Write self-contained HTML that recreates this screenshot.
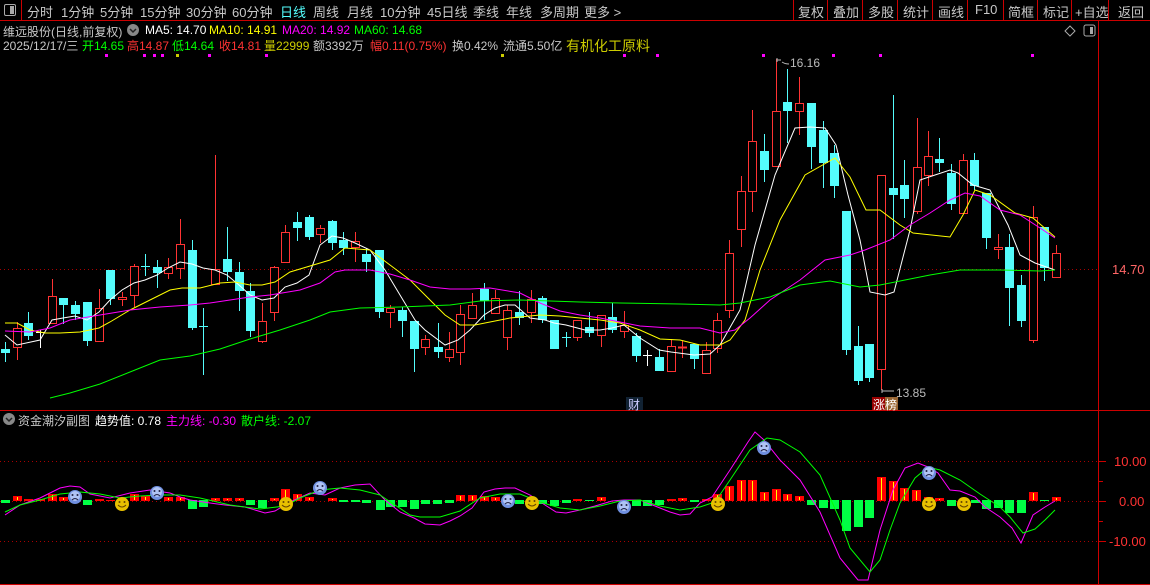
<!DOCTYPE html>
<html><head><meta charset="utf-8"><style>
body{margin:0;background:#000;width:1150px;height:585px;overflow:hidden;font-family:"Liberation Sans","Noto Sans CJK SC",sans-serif;position:relative}
.t{position:absolute;white-space:nowrap;font-size:12px}
#top{position:absolute;left:0;top:0;width:1150px;height:20px;border-bottom:1px solid #c00}
#top span{position:absolute;top:2px;font-size:13px;color:#c8c8c8;white-space:nowrap}
</style></head><body>
<div id="top">
<div style="position:absolute;left:1px;top:0;width:20px;height:20px;border-right:1px solid #c00"></div>
<div style="position:absolute;left:4px;top:4px;width:10px;height:10px;border:1px solid #aaa;border-radius:2px"><div style="position:absolute;right:1px;top:1px;width:4px;height:8px;background:#aaa"></div></div>
<span style="left:27px">分时</span><span style="left:61px">1分钟</span><span style="left:100px">5分钟</span><span style="left:140px">15分钟</span><span style="left:186px">30分钟</span><span style="left:232px">60分钟</span>
<span style="left:280px;color:#5ff">日线</span>
<span style="left:313px">周线</span><span style="left:347px">月线</span><span style="left:380px">10分钟</span><span style="left:427px">45日线</span><span style="left:473px">季线</span><span style="left:506px">年线</span><span style="left:540px">多周期</span><span style="left:584px">更多 &gt;</span>
<span style="left:798px">复权</span><span style="left:833px">叠加</span><span style="left:868px">多股</span><span style="left:903px">统计</span><span style="left:938px">画线</span><span style="left:975px">F10</span><span style="left:1008px">简框</span><span style="left:1043px">标记</span><span style="left:1075px">+自选</span><span style="left:1118px">返回</span>
</div>
<svg width="1150" height="585" style="position:absolute;left:0;top:0" id="s">
<g stroke="#c00" stroke-width="1">
<line x1="793.5" y1="0" x2="793.5" y2="20"/><line x1="827.5" y1="0" x2="827.5" y2="20"/><line x1="862.5" y1="0" x2="862.5" y2="20"/><line x1="897.5" y1="0" x2="897.5" y2="20"/><line x1="932.5" y1="0" x2="932.5" y2="20"/><line x1="967.5" y1="0" x2="967.5" y2="20"/><line x1="1003.5" y1="0" x2="1003.5" y2="20"/><line x1="1037.5" y1="0" x2="1037.5" y2="20"/><line x1="1071.5" y1="0" x2="1071.5" y2="20"/><line x1="1108.5" y1="0" x2="1108.5" y2="20"/>
<line x1="1098.5" y1="20" x2="1098.5" y2="585"/>
<line x1="0" y1="410.5" x2="1150" y2="410.5"/>
<line x1="0" y1="584.5" x2="1150" y2="584.5"/>
<line x1="1098" y1="481.5" x2="1103" y2="481.5"/><line x1="1098" y1="521.5" x2="1103" y2="521.5"/><line x1="1098" y1="461.5" x2="1106" y2="461.5"/><line x1="1098" y1="501.5" x2="1106" y2="501.5"/><line x1="1098" y1="541.5" x2="1106" y2="541.5"/>
</g>
<g stroke="#a00" stroke-dasharray="1 3">
<line x1="0" y1="269.5" x2="1098" y2="269.5"/><line x1="0" y1="461.5" x2="1098" y2="461.5"/><line x1="0" y1="501.5" x2="1098" y2="501.5"/><line x1="0" y1="541.5" x2="1098" y2="541.5"/>
</g>
<g id="c"></g>
<g fill="none" stroke-width="1">
<polyline stroke="#fff" points="5,335 17,345 40,340 52,320 63,318 75,316 87,320 99,312 110,300 122,290 134,283 145,280 157,275 168,268 180,262 192,264 203,268 215,270 227,275 239,285 250,295 262,300 274,298 285,287 297,283 309,275 320,245 332,236 343,238 355,243 370,250 385,270 400,295 415,320 425,330 445,345 458,340 470,330 484,315 495,308 505,305 515,305 530,318 545,320 554,323 566,325 585,330 600,330 612,328 624,325 640,338 659,350 671,352 694,355 710,354 720,345 740,310 755,245 775,175 795,128 810,127 825,128 836,145 848,195 860,240 870,292 885,295 894,292 910,230 920,180 935,175 950,170 958,173 973,185 990,190 1008,225 1020,255 1035,263 1055,270"/>
<polyline stroke="#ff0" points="5,323 17,323 30,330 45,333 60,333 80,332 99,328 110,322 130,310 150,300 170,290 182,288 200,288 220,283 235,282 250,285 262,285 275,282 290,272 310,266 330,260 345,248 370,250 390,265 410,280 430,300 445,315 460,325 475,325 490,322 510,318 540,315 560,316 580,318 600,320 620,323 640,330 660,339 680,340 700,345 720,345 730,340 745,320 760,270 780,220 805,175 835,158 850,177 866,210 880,210 900,225 913,233 950,237 963,215 975,190 990,195 1015,213 1033,218 1055,237"/>
<polyline stroke="#f0f" points="5,331 30,332 50,328 70,320 100,315 130,310 160,307 190,305 210,303 230,300 250,297 270,295 300,290 320,283 335,272 345,270 370,270 390,274 410,280 430,287 450,289 470,289 490,288 520,293 540,303 560,311 580,315 600,318 620,322 640,326 670,328 700,328 720,333 735,330 750,318 770,300 800,280 825,260 850,255 865,250 890,240 910,225 930,213 950,200 965,193 980,196 1000,210 1020,215 1040,228 1055,238"/>
<polyline stroke="#0f0" points="50,398 70,393 100,384 130,372 160,360 190,356 220,349 250,339 280,330 310,320 330,312 360,308 400,307 450,305 480,301 520,300 580,302 620,303 680,304 720,305 740,303 770,297 800,285 830,281 860,287 880,285 900,281 930,275 960,270 1000,270 1040,271 1055,270"/>
</g>
<g id="b"></g>
<g fill="none" stroke-width="1">
<polyline stroke="#f0f" points="5,515 20,505 40,498 50,493 60,488 70,486 80,487 90,494 110,498 130,493 150,490 170,493 180,497 190,500 210,503 225,505 245,507 265,513 275,511 290,502 310,493 325,495 340,488 355,485 370,484 385,500 400,512 414,518 425,524 440,525 450,521 460,516 472,508 484,492 495,489 505,488 515,488 530,495 545,505 556,512 566,513 580,510 595,506 612,501 624,500 640,500 660,508 670,512 680,515 690,514 700,503 712,497 730,470 748,442 755,432 764,440 780,460 800,480 820,512 840,558 858,580 868,580 880,530 893,490 905,468 918,463 928,467 938,473 950,490 960,491 975,497 985,507 1000,517 1012,528 1021,543 1033,515 1045,507 1055,501"/>
<polyline stroke="#0f0" points="5,512 20,505 40,500 60,494 80,492 100,494 120,498 140,496 160,495 180,495 200,498 230,505 260,509 285,506 300,498 320,490 340,488 360,490 380,495 395,505 410,515 420,517 440,517 460,511 480,498 500,494 520,494 540,502 560,508 580,510 600,506 620,501 640,500 660,506 680,510 700,507 715,502 730,480 750,450 767,438 780,440 800,452 820,475 840,520 850,548 870,572 880,560 890,530 900,503 915,478 928,467 940,470 960,480 980,494 1000,507 1010,517 1023,533 1035,529 1045,520 1055,510"/>
</g>
<g id="f"></g>
<g fill="#f0f"><rect x="105" y="54" width="3" height="3"/><rect x="143" y="54" width="3" height="3"/><rect x="153" y="54" width="3" height="3"/><rect x="161" y="54" width="3" height="3"/><rect x="208" y="54" width="3" height="3"/><rect x="265" y="54" width="3" height="3"/><rect x="623" y="54" width="3" height="3"/><rect x="656" y="54" width="3" height="3"/><rect x="762" y="54" width="3" height="3"/><rect x="832" y="54" width="3" height="3"/><rect x="879" y="54" width="3" height="3"/><rect x="1031" y="54" width="3" height="3"/></g>
<g fill="#cc0"><rect x="501" y="54" width="3" height="3"/><rect x="176" y="54" width="3" height="3"/></g>
<g stroke="#bbb" fill="none"><path d="M777,60 l4,0 M777,58 l0,4 M782,62 q3,2 7,2"/><path d="M882,391 l12,0 M882,389 l0,4"/></g>
<rect x="1084" y="25" width="11" height="11" rx="2" fill="none" stroke="#aaa"/><rect x="1090" y="27" width="3" height="7" fill="#aaa"/>
<path d="M1070,26 l5,5 l-5,5 l-5,-5z" fill="none" stroke="#aaa"/>
<circle cx="133" cy="30" r="6" fill="#888"/><path d="M130,29 l3,3 l3,-3" stroke="#222" fill="none" stroke-width="1.5"/>
<circle cx="9" cy="419" r="6" fill="#888"/><path d="M6,418 l3,3 l3,-3" stroke="#222" fill="none" stroke-width="1.5"/>
<rect x="626" y="397" width="17" height="13" fill="#123"/>
<rect x="872" y="397" width="13" height="13" fill="#900"/><rect x="885" y="397" width="13" height="13" fill="#963"/>
</svg>
<div class="t" style="left:3px;top:23px;color:#c8c8c8">维远股份(日线,前复权)</div>
<div class="t" style="left:145px;top:23px;color:#fff">MA5: 14.70</div>
<div class="t" style="left:209px;top:23px;color:#ff0">MA10: 14.91</div>
<div class="t" style="left:282px;top:23px;color:#f0f">MA20: 14.92</div>
<div class="t" style="left:354px;top:23px;color:#0f0">MA60: 14.68</div>
<div class="t" style="left:3px;top:37px;color:#c8c8c8">2025/12/17/三</div>
<div class="t" style="left:82px;top:37px;color:#0f0">开14.65</div>
<div class="t" style="left:127px;top:37px;color:#f33">高14.87</div>
<div class="t" style="left:172px;top:37px;color:#0f0">低14.64</div>
<div class="t" style="left:219px;top:37px;color:#f33">收14.81</div>
<div class="t" style="left:264px;top:37px;color:#cc0">量22999</div>
<div class="t" style="left:313px;top:37px;color:#c8c8c8">额3392万</div>
<div class="t" style="left:370px;top:37px;color:#f33">幅0.11(0.75%)</div>
<div class="t" style="left:452px;top:37px;color:#c8c8c8">换0.42%</div>
<div class="t" style="left:503px;top:37px;color:#c8c8c8">流通5.50亿</div>
<div class="t" style="left:566px;top:36px;color:#cc0;font-size:14px">有机化工原料</div>
<div class="t" style="left:790px;top:56px;color:#bbb">16.16</div>
<div class="t" style="left:896px;top:386px;color:#bbb">13.85</div>
<div class="t" style="left:628px;top:396px;color:#ccf">财</div>
<div class="t" style="left:873px;top:396px;color:#fff">涨榜</div>
<div class="t" style="left:1112px;top:262px;color:#f66;font-size:13px">14.70</div>
<div class="t" style="left:18px;top:412px;color:#c8c8c8">资金潮汐副图</div>
<div class="t" style="left:95px;top:412px;color:#fff">趋势值: 0.78</div>
<div class="t" style="left:166px;top:412px;color:#f0f">主力线: -0.30</div>
<div class="t" style="left:241px;top:412px;color:#0f0">散户线: -2.07</div>
<div class="t" style="left:1114px;top:454px;color:#f33;font-size:13px">10.00</div>
<div class="t" style="left:1119px;top:494px;color:#f33;font-size:13px">0.00</div>
<div class="t" style="left:1109px;top:534px;color:#f33;font-size:13px">-10.00</div>
<script>
var C=[[5,349,353,342,362,'c'],[17,328,347,322,360,'r'],[28,323,336,312,340,'c'],[40,332,333,330,348,'w'],[52,296,323,279,323,'r'],[63,298,305,298,324,'c'],[75,305,314,301,320,'c'],[87,302,341,302,346,'c'],[99,308,341,289,341,'r'],[110,270,299,270,305,'c'],[122,297,299,292,306,'r'],[134,266,295,264,307,'r'],[145,266,267,254,276,'c'],[157,267,273,260,288,'c'],[168,267,273,258,279,'r'],[180,244,268,219,279,'r'],[192,250,328,240,330,'c'],[203,326,327,308,375,'c'],[215,269,284,155,284,'r'],[227,259,272,227,281,'c'],[239,272,291,262,311,'c'],[250,291,331,283,337,'c'],[262,321,341,303,343,'r'],[274,267,312,266,321,'r'],[285,232,262,225,262,'r'],[297,222,228,212,241,'c'],[309,217,237,215,240,'c'],[320,228,234,225,243,'r'],[332,221,243,220,250,'c'],[343,240,248,232,255,'c'],[355,241,247,232,262,'r'],[366,254,262,248,272,'c'],[379,250,312,250,318,'c'],[390,308,312,305,328,'r'],[402,310,321,307,337,'c'],[414,321,349,321,372,'c'],[425,339,347,335,355,'r'],[438,347,352,323,358,'c'],[449,349,357,332,362,'r'],[460,314,352,305,365,'r'],[472,305,318,293,318,'r'],[484,289,301,283,320,'c'],[495,298,313,290,313,'r'],[507,310,337,305,350,'r'],[519,312,318,291,325,'c'],[531,299,312,290,323,'r'],[542,298,320,296,323,'c'],[554,320,349,320,349,'c'],[566,337,338,332,347,'c'],[577,320,337,320,341,'r'],[589,327,333,312,337,'c'],[601,315,335,315,347,'r'],[612,317,330,303,333,'c'],[624,325,331,311,338,'r'],[636,336,356,333,362,'c'],[647,355,356,350,366,'w'],[659,357,371,349,371,'c'],[671,346,371,339,371,'r'],[682,347,348,341,358,'r'],[694,344,359,344,369,'c'],[706,350,373,342,373,'r'],[717,320,348,313,353,'r'],[729,253,310,240,318,'r'],[741,191,229,176,247,'r'],[752,141,191,110,212,'r'],[764,151,170,134,182,'c'],[776,111,166,59,166,'r'],[787,102,111,69,143,'c'],[799,103,111,77,135,'r'],[811,103,147,103,169,'c'],[823,130,163,121,188,'c'],[834,153,186,145,198,'c'],[846,211,350,211,355,'c'],[858,346,381,326,385,'c'],[869,344,378,344,382,'c'],[881,175,369,175,390,'r'],[893,188,195,95,239,'c'],[904,185,199,160,218,'c'],[917,167,211,118,214,'r'],[928,156,175,131,186,'r'],[939,159,163,138,172,'c'],[951,173,204,164,210,'c'],[963,160,213,154,213,'r'],[974,160,186,153,190,'c'],[986,193,238,193,249,'c'],[998,247,249,234,259,'r'],[1009,247,288,234,326,'c'],[1021,285,321,275,327,'c'],[1033,217,340,206,343,'r'],[1044,227,268,227,281,'c'],[1056,253,277,245,278,'r']];
var col={r:'#f33',c:'#54fcfc',w:'#fff'},h='';
C.forEach(function(d){var x=d[0],k=col[d[5]];h+='<line x1="'+(x+.5)+'" y1="'+d[3]+'" x2="'+(x+.5)+'" y2="'+d[4]+'" stroke="'+k+'"/>';
var ht=d[2]-d[1];if(ht<2){h+='<line x1="'+(x-4)+'" y1="'+(d[1]+.5)+'" x2="'+(x+5)+'" y2="'+(d[1]+.5)+'" stroke="'+k+'" stroke-width="'+(d[5]=='r'?2:1)+'"/>';}
else if(d[5]=='r')h+='<rect x="'+(x-3.5)+'" y="'+(d[1]+.5)+'" width="8" height="'+ht+'" fill="#000" stroke="'+k+'"/>';
else h+='<rect x="'+(x-4)+'" y="'+d[1]+'" width="9" height="'+ht+'" fill="'+k+'"/>';});
document.getElementById('c').innerHTML=h;
var B=[[5,-3],[17,5],[28,2],[40,2],[52,7],[63,4],[87,-5],[99,2],[110,1],[134,7],[145,5],[168,4],[180,4],[192,-9],[203,-7],[215,3],[227,3],[239,3],[250,-5],[262,-8],[274,3],[285,12],[297,7],[309,4],[332,3],[343,-2],[355,-2],[366,-3],[380,-10],[390,-7],[402,-7],[414,-9],[425,-4],[437,-4],[449,-3],[460,6],[472,6],[484,5],[495,4],[519,-4],[542,-4],[554,-6],[566,-3],[577,2],[589,-1],[601,4],[636,-6],[647,-6],[659,-5],[671,2],[682,3],[694,-2],[706,2],[717,7],[729,15],[741,21],[752,21],[764,9],[776,12],[787,7],[799,5],[811,-5],[823,-8],[834,-9],[846,-31],[858,-27],[869,-18],[881,24],[893,20],[904,13],[916,11],[928,4],[939,3],[951,-6],[975,-3],[986,-9],[998,-8],[1009,-13],[1021,-13],[1033,9],[1044,-1],[1056,4]];
h='';B.forEach(function(d){var x=d[0],v=d[1];if(v>0){h+='<rect x="'+(x-4)+'" y="'+(501-v)+'" width="9" height="'+v+'" fill="#f00"/><rect x="'+x+'" y="'+(502-v)+'" width="1" height="'+(v-2)+'" fill="#ff0"/>';}else h+='<rect x="'+(x-4)+'" y="500" width="9" height="'+(-v)+'" fill="#0f4"/>';});
document.getElementById('b').innerHTML=h;
var S=[[75,497],[157,493],[320,488],[508,501],[624,507],[764,448],[929,473]],M=[[122,504],[286,504],[532,503],[718,504],[929,504],[964,504]];h='';
M.forEach(function(p){h+='<circle cx="'+p[0]+'" cy="'+p[1]+'" r="7" fill="#e8c000"/><circle cx="'+(p[0]-2.5)+'" cy="'+(p[1]-2)+'" r="1" fill="#640"/><circle cx="'+(p[0]+2.5)+'" cy="'+(p[1]-2)+'" r="1" fill="#640"/><path d="M'+(p[0]-4)+','+(p[1]+1)+' q4,4 8,0" stroke="#640" fill="none"/>';});
S.forEach(function(p){h+='<circle cx="'+p[0]+'" cy="'+p[1]+'" r="7" fill="#7090e0"/><circle cx="'+p[0]+'" cy="'+(p[1]-1)+'" r="5" fill="#b0c4f4"/><circle cx="'+(p[0]-2.5)+'" cy="'+(p[1]-2)+'" r="1" fill="#224"/><circle cx="'+(p[0]+2.5)+'" cy="'+(p[1]-2)+'" r="1" fill="#224"/><path d="M'+(p[0]-3)+','+(p[1]+3)+' q3,-3 6,0" stroke="#224" fill="none"/>';});
document.getElementById('f').innerHTML=h;
</script>
</body></html>
